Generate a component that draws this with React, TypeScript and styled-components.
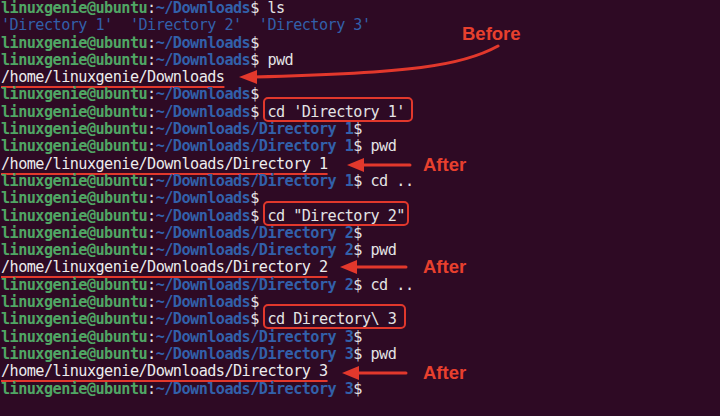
import React from "react";
import styled, { createGlobalStyle } from "styled-components";

const Global = createGlobalStyle`
  html, body { margin: 0; padding: 0; background: #2e0a24; }
  #root { width: 720px; height: 416px; }
`;

const Screen = styled.div`
  position: relative;
  width: 720px;
  height: 416px;
  overflow: hidden;
  background: #2e0a24;
`;

const Terminal = styled.div`
  display: flex;
  flex-direction: column;
  padding: 0 0 0 1px;
  font-family: "DejaVu Sans Mono", "Liberation Mono", monospace;
  font-size: 15.2px;
  letter-spacing: -0.55px;
  color: #e4e4e4;
`;

const Line = styled.div`
  height: 17.3px;
  line-height: 17.3px;
  white-space: pre;
`;

const User = styled.span`
  color: #50a664;
  font-weight: bold;
`;

const Path = styled.span`
  color: #3260aa;
  font-weight: bold;
`;

const Plain = styled.span`
  color: #e4e4e4;
`;

const Listing = styled.span`
  color: #3260aa;
`;

const Highlight = styled.span<{ $right: number }>`
  position: relative;
  &::after {
    content: "";
    position: absolute;
    top: -6px;
    bottom: -1px;
    left: -4px;
    right: ${(p) => p.$right}px;
    border: 2px solid #e2382c;
    border-radius: 5px;
  }
`;

const Output = styled.span`
  color: #ececec;
  text-decoration: underline 2px #e2382c;
  text-underline-offset: 4px;
`;

const Arrows = styled.svg`
  position: absolute;
  left: 0;
  top: 0;
  width: 720px;
  height: 416px;
  pointer-events: none;
`;

const Label = styled.span<{ $x: number; $y: number }>`
  position: absolute;
  left: ${(p) => p.$x}px;
  top: ${(p) => p.$y}px;
  font-family: "Liberation Sans", Arial, sans-serif;
  font-weight: bold;
  font-size: 18.5px;
  line-height: 20px;
  color: #e8402e;
`;

const Prompt = ({ dir }: { dir?: string }) => (
  <>
    <User>linuxgenie@ubuntu</User>
    <Plain>:</Plain>
    <Path>~/Downloads{dir ? `/${dir}` : ""}</Path>
    <Plain>$</Plain>
  </>
);

type Row =
  | { kind: "prompt"; dir?: string; cmd?: string; box?: number }
  | { kind: "out"; text: string }
  | { kind: "ls"; text: string };

const rows: Row[] = [
  { kind: "prompt", cmd: "ls" },
  { kind: "ls", text: "'Directory 1'  'Directory 2'  'Directory 3'" },
  { kind: "prompt" },
  { kind: "prompt", cmd: "pwd" },
  { kind: "out", text: "/home/linuxgenie/Downloads" },
  { kind: "prompt" },
  { kind: "prompt", cmd: "cd 'Directory 1'", box: -8 },
  { kind: "prompt", dir: "Directory 1" },
  { kind: "prompt", dir: "Directory 1", cmd: "pwd" },
  { kind: "out", text: "/home/linuxgenie/Downloads/Directory 1" },
  { kind: "prompt", dir: "Directory 1", cmd: "cd .." },
  { kind: "prompt" },
  { kind: "prompt", cmd: 'cd "Directory 2"', box: -4 },
  { kind: "prompt", dir: "Directory 2" },
  { kind: "prompt", dir: "Directory 2", cmd: "pwd" },
  { kind: "out", text: "/home/linuxgenie/Downloads/Directory 2" },
  { kind: "prompt", dir: "Directory 2", cmd: "cd .." },
  { kind: "prompt" },
  { kind: "prompt", cmd: "cd Directory\\ 3", box: -10 },
  { kind: "prompt", dir: "Directory 3" },
  { kind: "prompt", dir: "Directory 3", cmd: "pwd" },
  { kind: "out", text: "/home/linuxgenie/Downloads/Directory 3" },
  { kind: "prompt", dir: "Directory 3" },
];

const afterArrows = [
  { tip: 347, end: 410, y: 165 },
  { tip: 340, end: 406, y: 267 },
  { tip: 342, end: 406, y: 373 },
];

export default function App() {
  return (
    <>
      <Global />
      <Screen>
        <Terminal>
          {rows.map((r, i) => (
            <Line key={i}>
              {r.kind === "prompt" && (
                <>
                  <Prompt dir={r.dir} />
                  {r.cmd && <Plain> </Plain>}
                  {r.cmd &&
                    (r.box !== undefined ? (
                      <Highlight $right={r.box}>{r.cmd}</Highlight>
                    ) : (
                      <Plain>{r.cmd}</Plain>
                    ))}
                </>
              )}
              {r.kind === "ls" && <Listing>{r.text}</Listing>}
              {r.kind === "out" && <Output>{r.text}</Output>}
            </Line>
          ))}
        </Terminal>
        <Arrows viewBox="0 0 720 416">
          <path
            d="M 498 46 C 462 66, 410 73, 254 77"
            fill="none"
            stroke="#e2382c"
            strokeWidth="3"
            strokeLinecap="round"
          />
          <polygon points="239,77 257,70 257,84" fill="#e2382c" />
          {afterArrows.map((a, i) => (
            <g key={i}>
              <line
                x1={a.tip + 14}
                y1={a.y}
                x2={a.end}
                y2={a.y}
                stroke="#e2382c"
                strokeWidth="3"
                strokeLinecap="round"
              />
              <polygon
                points={`${a.tip},${a.y} ${a.tip + 17},${a.y - 7} ${a.tip + 17},${a.y + 7}`}
                fill="#e2382c"
              />
            </g>
          ))}
        </Arrows>
        <Label $x={462} $y={24}>Before</Label>
        <Label $x={423} $y={155}>After</Label>
        <Label $x={423} $y={257}>After</Label>
        <Label $x={423} $y={363}>After</Label>
      </Screen>
    </>
  );
}
